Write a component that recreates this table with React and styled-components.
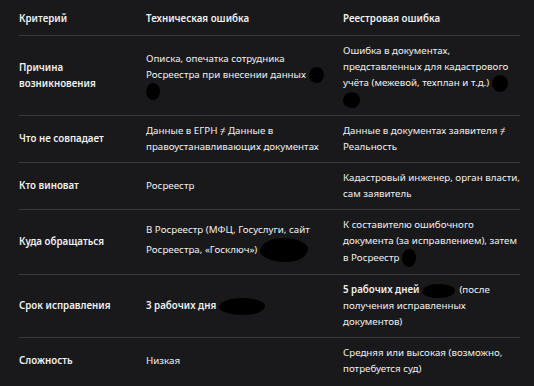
import React from 'react';
import styled, { createGlobalStyle } from 'styled-components';

const GlobalStyle = createGlobalStyle`
  html, body {
    margin: 0;
    padding: 0;
    background: #19191b;
  }
  body {
    font-family: "Noto Sans", "Open Sans", sans-serif;
    color: #f0f0f0;
  }
`;

const Page = styled.div`
  padding: 3px 14px 0 19px;
`;

const Table = styled.div`
  width: 501px;
  font-size: 9.75px;
  line-height: 16px;
`;

const Row = styled.div`
  display: grid;
  grid-template-columns: 127px 197px 177px;
  align-items: center;
  padding: ${p => (p.$head ? '8px 0' : '7px 0')};
  border-bottom: ${p => (p.$last ? 'none' : '1px solid #3a3a3c')};
`;

const Cell = styled.div`
  padding-right: 10px;
  font-weight: ${p => (p.$bold ? 600 : 400)};
  &:last-child {
    padding-right: 0;
  }
`;

const Strong = styled.strong`
  font-weight: 600;
`;

const Blot = styled.span`
  display: inline-block;
  width: ${p => p.$w}px;
  height: ${p => p.$h}px;
  margin-right: ${p => p.$gap || 0}px;
  background: #000;
  border-radius: 48% 52% 45% 55% / 55% 45% 55% 45%;
  vertical-align: middle;
`;

const rows = [
  {
    label: 'Причина возникновения',
    tech: <>Описка, опечатка сотрудника Росреестра при внесении данных <Blot $w={15} $h={16} /><br /><Blot $w={14} $h={17} /></>,
    reg: <>Ошибка в документах, представленных для кадастрового учёта (межевой, техплан и т.д.) <Blot $w={16} $h={17} /><br /><Blot $w={17} $h={16} /></>,
  },
  {
    label: 'Что не совпадает',
    tech: 'Данные в ЕГРН ≠ Данные в правоустанавливающих документах',
    reg: 'Данные в документах заявителя ≠ Реальность',
  },
  {
    label: 'Кто виноват',
    tech: 'Росреестр',
    reg: 'Кадастровый инженер, орган власти, сам заявитель',
  },
  {
    label: 'Куда обращаться',
    tech: <>В Росреестр (МФЦ, Госуслуги, сайт Росреестра, «Госключ») <Blot $w={48} $h={24} /></>,
    reg: <>К составителю ошибочного документа (за исправлением), затем в Росреестр <Blot $w={14} $h={18} /></>,
  },
  {
    label: 'Срок исправления',
    tech: <><Strong>3 рабочих дня</Strong> <Blot $w={46} $h={17} /></>,
    reg: <><Strong>5 рабочих дней</Strong> <Blot $w={33} $h={14} $gap={2} /> (после получения исправленных документов)</>,
  },
  {
    label: 'Сложность',
    tech: 'Низкая',
    reg: 'Средняя или высокая (возможно, потребуется суд)',
  },
];

export default function App() {
  return (
    <>
      <GlobalStyle />
      <Page>
        <Table>
          <Row $head>
            <Cell $bold>Критерий</Cell>
            <Cell $bold>Техническая ошибка</Cell>
            <Cell $bold>Реестровая ошибка</Cell>
          </Row>
          {rows.map((r, i) => (
            <Row key={r.label} $last={i === rows.length - 1}>
              <Cell $bold>{r.label}</Cell>
              <Cell>{r.tech}</Cell>
              <Cell>{r.reg}</Cell>
            </Row>
          ))}
        </Table>
      </Page>
    </>
  );
}
